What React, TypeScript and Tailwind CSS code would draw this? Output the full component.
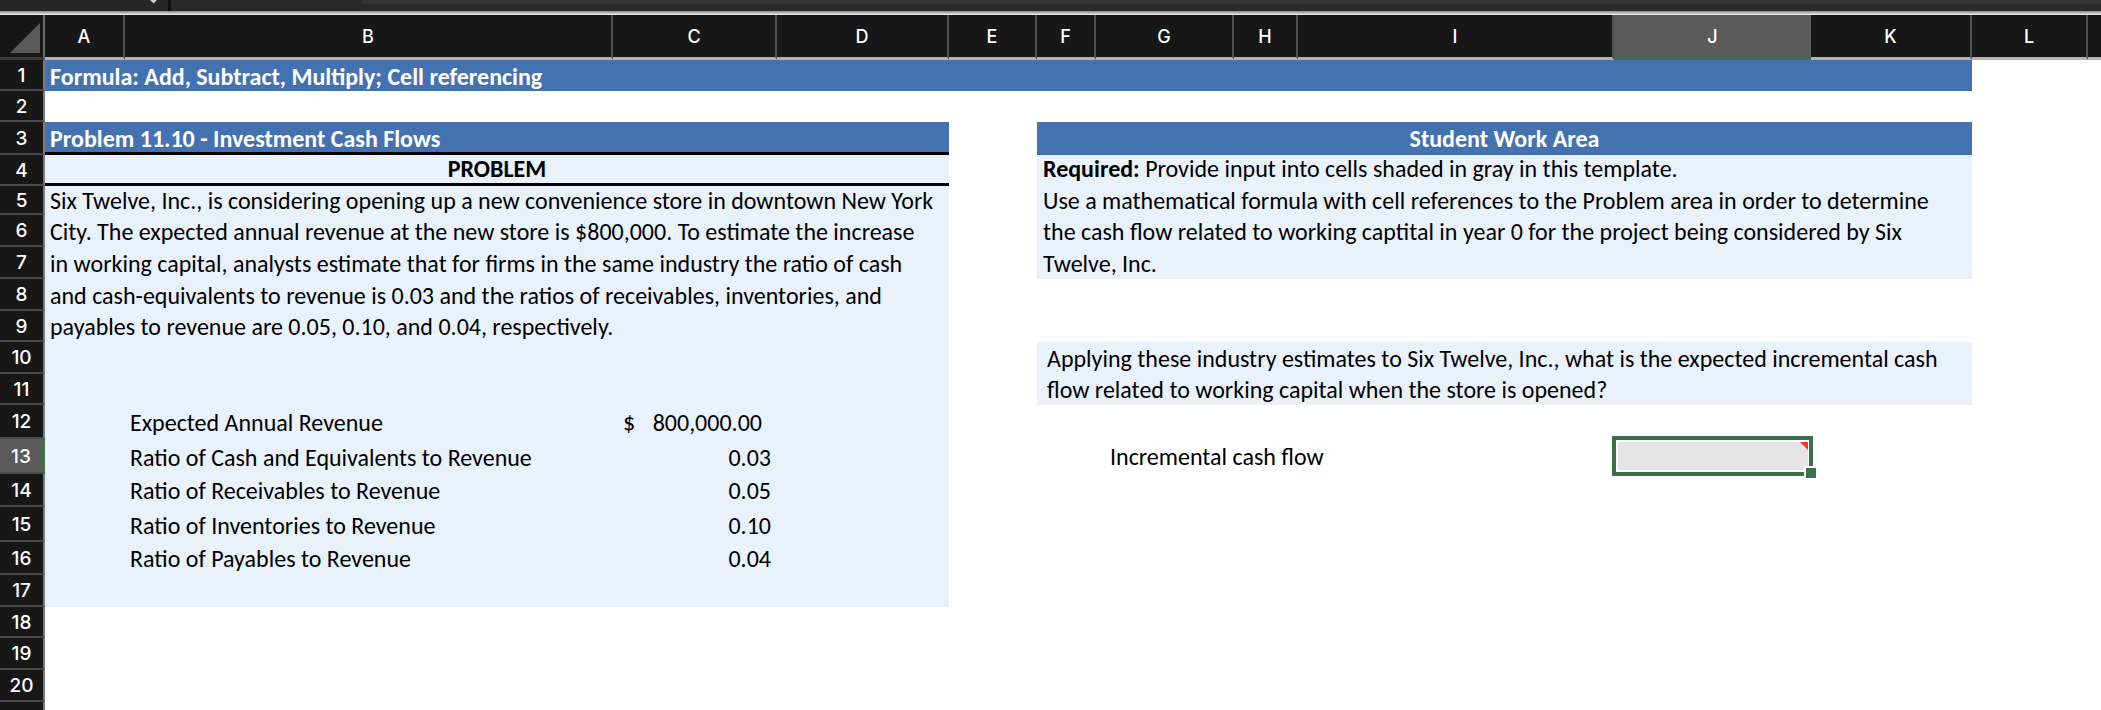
import React from "react";

const cellFont = { fontFamily: "Carlito, Calibri, Lato, 'Liberation Sans', sans-serif" };
const hdrFont = { fontFamily: "Inter, 'Open Sans', 'Liberation Sans', sans-serif" };

const cols: { l: string; w: string; sel?: boolean }[] = [
  { l: "A", w: "w-[80px]" },
  { l: "B", w: "w-[488px]" },
  { l: "C", w: "w-[164px]" },
  { l: "D", w: "w-[172px]" },
  { l: "E", w: "w-[88px]" },
  { l: "F", w: "w-[59px]" },
  { l: "G", w: "w-[138px]" },
  { l: "H", w: "w-[64px]" },
  { l: "I", w: "w-[316px]" },
  { l: "J", w: "w-[197px]", sel: true },
  { l: "K", w: "w-[161px]" },
  { l: "L", w: "w-[116px]" },
];

const rowLabels = Array.from({ length: 21 }, (_, i) => i + 1);

function RowHead({ n }: { n: number }) {
  const sel = n === 13;
  return (
    <div
      style={{ ...hdrFont, gridColumn: "1 / 2", gridRow: `${n} / ${n + 1}` }}
      className={
        sel
          ? "flex items-center justify-center pt-[3px] bg-[#5a5a5a] text-white text-[19px] font-medium border-b-2 border-b-[#4a4a4a] border-r-[3px] border-r-[#3c7049]"
          : "flex items-center justify-center pt-[3px] bg-[#171717] text-white text-[19px] font-medium border-b-2 border-b-[#4a4a4a] border-r-2 border-r-[#7a7a7a]"
      }
    >
      {n <= 20 ? n : ""}
    </div>
  );
}

const line = "flex items-end whitespace-nowrap leading-[26px]";

export default function App() {
  return (
    <div className="w-[2101px] h-[710px] overflow-hidden bg-white flex flex-col">
      {/* formula bar remnant */}
      <div className="h-[11px] flex shrink-0">
        <div className="w-[168px] bg-[#262626] relative">
          <svg className="absolute left-[150px] top-0" width="7" height="4" viewBox="0 0 7 4">
            <polygon points="0,0 7,0 3.5,3.5" fill="#d0d0d0" />
          </svg>
        </div>
        <div className="w-[3px] bg-[#111111]" />
        <div className="w-[191px] bg-[#282828]" />
        <div className="flex-1 flex flex-col">
          <div className="h-[4px] bg-[#333333]" />
          <div className="flex-1 bg-[#2a2a2a]" />
        </div>
      </div>
      <div className="h-[4px] shrink-0 bg-linear-to-b from-[#8a8a8a] to-[#f2f2f2]" />

      {/* column header */}
      <div className="h-[45px] flex shrink-0 bg-[#171717] text-white text-[18px] font-medium" style={hdrFont}>
        <div className="w-[45px] shrink-0 border-r-2 border-r-[#6b6b6b] border-b-[3px] border-b-[#3a3a3a] relative">
          <svg className="absolute left-[10px] top-[8px]" width="30" height="30" viewBox="0 0 30 30">
            <polygon points="0,30 30,0 30,30" fill="#5a5a5a" />
          </svg>
        </div>
        {cols.map((c) => (
          <div
            key={c.l}
            className={
              c.sel
                ? `${c.w} shrink-0 flex items-center justify-center bg-[#5a5a5a] border-b-[3px] border-b-[#3c7049]`
                : `${c.w} shrink-0 flex items-center justify-center border-r-2 border-r-[#505050] border-b-[3px] border-b-[#b3b3b3]`
            }
          >
            {c.l}
          </div>
        ))}
        <div className="flex-1 border-b-[3px] border-b-[#b3b3b3]" />
      </div>

      {/* sheet body */}
      <div
        className="grid grid-cols-[45px_80px_488px_164px_172px_88px_59px_138px_64px_316px_197px_161px_116px_1fr] grid-rows-[31px_31px_33px_31px_29px_32px_32px_32px_31px_32px_31px_34px_35px_33px_35px_33px_32px_31px_32px_32px_32px] text-[24px] text-black"
        style={cellFont}
      >
        {rowLabels.map((n) => (
          <RowHead key={n} n={n} />
        ))}

        {/* Row 1 banner */}
        <div className={`col-[2/13] row-[1] bg-[#4472b0] text-white font-bold pl-[5px] pb-[1px] ${line}`}>
          Formula: Add, Subtract, Multiply; Cell referencing
        </div>

        {/* Problem box */}
        <div className={`col-[2/6] row-[3] bg-[#4472b0] text-white font-bold pl-[5px] pb-[0px] border-b-[3px] border-b-black ${line}`}>
          Problem 11.10 - Investment Cash Flows
        </div>
        <div className={`col-[2/6] row-[4] bg-[#e9f1fa] font-bold justify-center pb-[1px] border-b-[3px] border-b-black ${line}`}>
          PROBLEM
        </div>
        <div className="col-[2/6] row-[5/18] bg-[#e9f1fa]" />
        <div className={`col-[2/6] row-[5] pl-[5px] pb-[1px] ${line}`}>
          Six Twelve, Inc., is considering opening up a new convenience store in downtown New York
        </div>
        <div className={`col-[2/6] row-[6] pl-[5px] pb-[2px] ${line}`}>
          City. The expected annual revenue at the new store is $800,000. To estimate the increase
        </div>
        <div className={`col-[2/6] row-[7] pl-[5px] pb-[2px] ${line}`}>
          in working capital, analysts estimate that for firms in the same industry the ratio of cash
        </div>
        <div className={`col-[2/6] row-[8] pl-[5px] pb-[2px] ${line}`}>
          and cash-equivalents to revenue is 0.03 and the ratios of receivables, inventories, and
        </div>
        <div className={`col-[2/6] row-[9] pl-[5px] pb-[2px] ${line}`}>
          payables to revenue are 0.05, 0.10, and 0.04, respectively.
        </div>

        <div className={`col-[3/4] row-[12] pl-[5px] pb-[3px] ${line}`}>Expected Annual Revenue</div>
        <div className={`col-[4/5] row-[12] justify-between pl-[10px] pr-[15px] pb-[3px] ${line}`}>
          <span>$</span>
          <span>800,000.00</span>
        </div>
        <div className={`col-[3/4] row-[13] pl-[5px] pb-[3px] ${line}`}>Ratio of Cash and Equivalents to Revenue</div>
        <div className={`col-[4/5] row-[13] justify-end pr-[6px] pb-[3px] ${line}`}>0.03</div>
        <div className={`col-[3/4] row-[14] pl-[5px] pb-[3px] ${line}`}>Ratio of Receivables to Revenue</div>
        <div className={`col-[4/5] row-[14] justify-end pr-[6px] pb-[3px] ${line}`}>0.05</div>
        <div className={`col-[3/4] row-[15] pl-[5px] pb-[3px] ${line}`}>Ratio of Inventories to Revenue</div>
        <div className={`col-[4/5] row-[15] justify-end pr-[6px] pb-[3px] ${line}`}>0.10</div>
        <div className={`col-[3/4] row-[16] pl-[5px] pb-[3px] ${line}`}>Ratio of Payables to Revenue</div>
        <div className={`col-[4/5] row-[16] justify-end pr-[6px] pb-[3px] ${line}`}>0.04</div>

        {/* Student work area */}
        <div className={`col-[7/13] row-[3] bg-[#4472b0] text-white font-bold justify-center pb-[3px] ${line}`}>
          Student Work Area
        </div>
        <div className="col-[7/13] row-[4/8] bg-[#e9f1fa]" />
        <div className={`col-[7/13] row-[4] pl-[6px] pb-[4px] ${line}`}>
          <span className="font-bold">Required:</span>
          <span>&nbsp;Provide input into cells shaded in gray in this template.</span>
        </div>
        <div className={`col-[7/13] row-[5] pl-[6px] pb-[1px] ${line}`}>
          Use a mathematical formula with cell references to the Problem area in order to determine
        </div>
        <div className={`col-[7/13] row-[6] pl-[6px] pb-[2px] ${line}`}>
          the cash flow related to working captital in year 0 for the project being considered by Six
        </div>
        <div className={`col-[7/13] row-[7] pl-[6px] pb-[2px] ${line}`}>Twelve, Inc.</div>

        <div className="col-[7/13] row-[10/12] bg-[#e9f1fa]" />
        <div className={`col-[7/13] row-[10] pl-[10px] pb-[2px] ${line}`}>
          Applying these industry estimates to Six Twelve, Inc., what is the expected incremental cash
        </div>
        <div className={`col-[7/13] row-[11] pl-[10px] pb-[2px] ${line}`}>
          flow related to working capital when the store is opened?
        </div>

        <div className={`col-[8/10] row-[13] pl-[14px] pb-[4px] ${line}`}>Incremental cash flow</div>

        {/* Input cell J13 (selected) */}
        <div className="col-[11/12] row-[13] relative pt-[3px] pr-[3px] pb-[4px] pl-[4px]">
          <div className="h-full bg-[#e4e4e4] relative">
            <svg className="absolute top-0 right-0" width="8" height="8" viewBox="0 0 8 8">
              <polygon points="0,0 8,0 8,8" fill="#e8392b" />
            </svg>
          </div>
          <div className="absolute left-[-2px] top-[-3px] right-[-2px] bottom-[-2px] border-4 border-[#3c7049]" />
          <div className="absolute right-[-5px] bottom-[-4px] w-[12px] h-[12px] bg-[#3c7049] border-l-2 border-t-2 border-white" />
        </div>
      </div>
    </div>
  );
}
